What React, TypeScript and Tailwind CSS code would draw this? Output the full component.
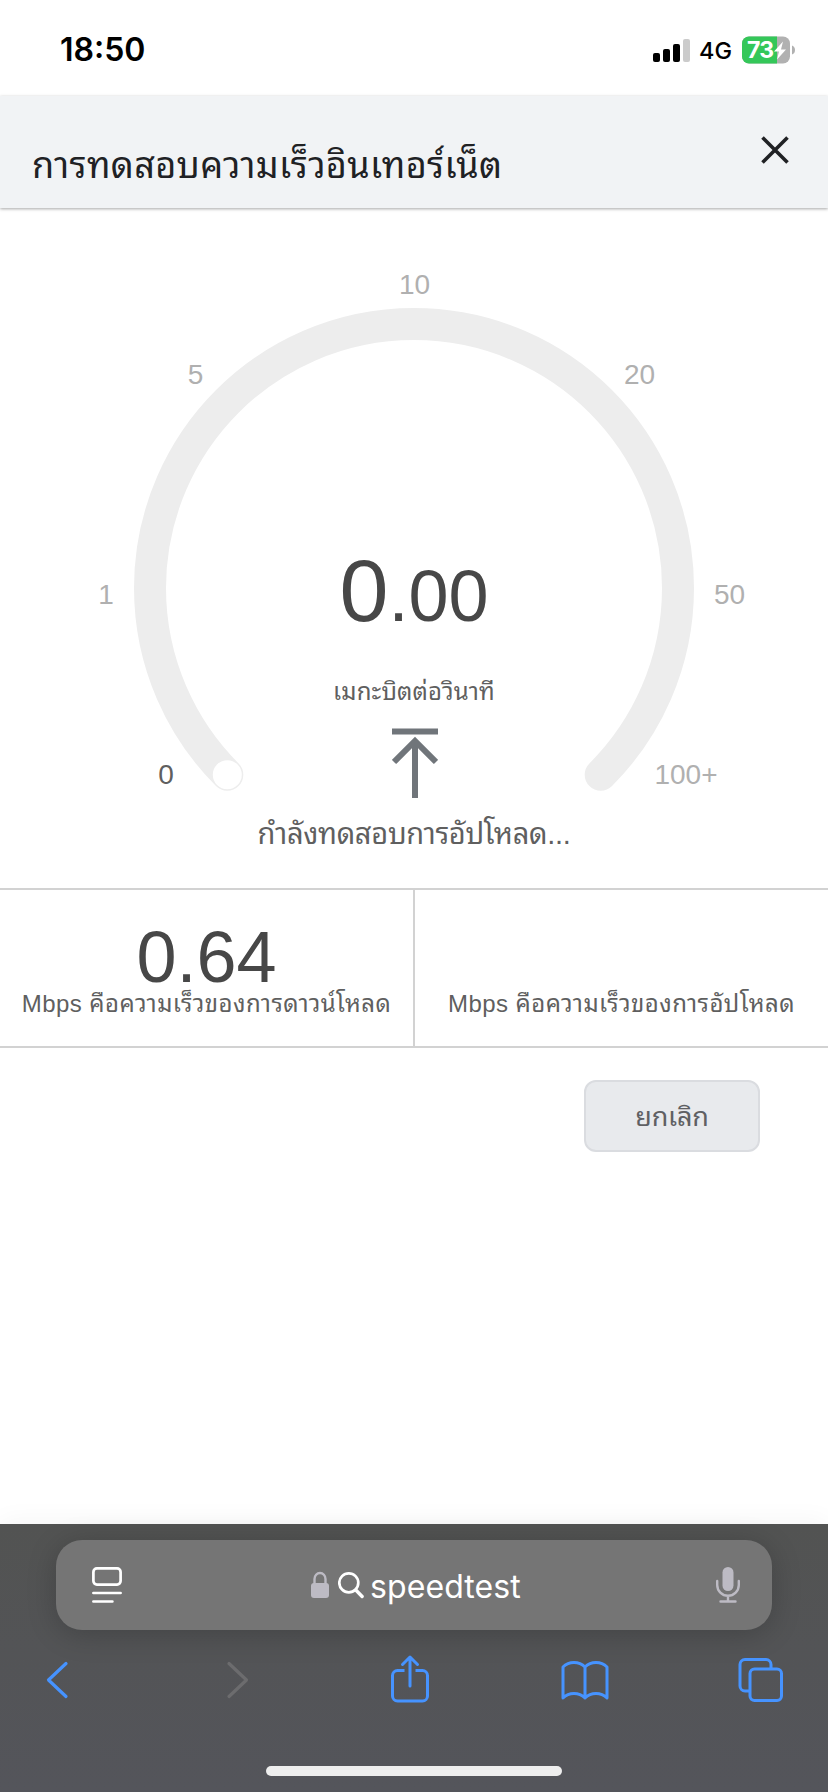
const ticks = [
  { label: '0', x: 166, y: 576, active: true },
  { label: '1', x: 106, y: 396 },
  { label: '5', x: 195.5, y: 175.5 },
  { label: '10', x: 414.5, y: 85.5 },
  { label: '20', x: 639.5, y: 175.5 },
  { label: '50', x: 729.5, y: 396 },
  { label: '100+', x: 686, y: 576 },
];

function StatusBar() {
  return (
    <div className="flex h-24 shrink-0 items-center pl-[60px] pr-8 pt-1 font-['Inter',sans-serif] text-black">
      <span className="text-[32px] font-semibold leading-10">18:50</span>
      <div className="ml-auto flex items-center">
        <svg width="38" height="28" viewBox="0 0 38 28">
          <rect x="0" y="17" width="7" height="9" rx="2" />
          <rect x="10" y="13" width="7" height="13" rx="2" />
          <rect x="20" y="8" width="7" height="18" rx="2" />
          <rect x="30" y="3" width="7" height="23" rx="2" fill="#cbcbcb" />
        </svg>
        <span className="ml-2 pt-0.5 text-[23.5px] font-medium leading-7">4G</span>
        <svg className="ml-2.5" width="54" height="28" viewBox="0 0 54 28">
          <clipPath id="battery">
            <rect x="0" y="0.500" width="48" height="27" rx="7" />
          </clipPath>
          <g clipPath="url(#battery)">
            <rect width="48" height="28" fill="#b1b1b1" />
            <rect width="35" height="28" fill="#34c759" />
          </g>
          <path d="M50 9.500q3 1 3 4.500t-3 4.500z" fill="#b1b1b1" />
          <text x="5" y="22" fontSize="23" fontWeight="700" letterSpacing="-0.8" fill="#fff">73</text>
          <path d="M41 5.500l-9 10h5l-2 8 9-10h-5z" fill="#fff" />
        </svg>
      </div>
    </div>
  );
}

function Gauge() {
  return (
    <svg className="col-start-1 row-start-1" width="828" height="680" viewBox="0 0 828 680">
      <path
        d="M227.300 566.700A264 264 0 1 1 600.700 566.700"
        fill="none"
        stroke="#ededed"
        strokeWidth="32"
        strokeLinecap="round"
      />
      <circle cx="227.300" cy="566.700" r="14.500" fill="#fff" />
      {ticks.map((t) => (
        <text
          key={t.label}
          x={t.x}
          y={t.y}
          textAnchor="middle"
          fontSize="28"
          fill={t.active ? '#5f5f5f' : '#b0b0b0'}
        >
          {t.label}
        </text>
      ))}
    </svg>
  );
}

function Result({ value, label }: { value?: string; label: string }) {
  return (
    <div className="flex flex-col items-center pt-[37px]">
      <div className="h-[60px] text-[72px] leading-[60px] text-[#474747]">{value}</div>
      <div className="mt-px whitespace-nowrap text-2xl leading-8 tracking-[0.45px] text-[#5f5f5f]">{label}</div>
    </div>
  );
}

function BrowserBar() {
  return (
    <div className="mt-auto flex h-[268px] shrink-0 flex-col bg-linear-to-b from-[#525352] to-[#54555b] pt-4 shadow-[0_-4px_24px_rgba(0,0,0,0.04)]">
      <div className="mx-14 flex h-[90px] items-center rounded-[26px] bg-[#757575] pl-9 pr-8 font-['Inter',sans-serif] text-white shadow-[0_4px_30px_rgba(0,0,0,0.2)]">
        <svg width="30" height="38" viewBox="0 0 30 38" fill="none" stroke="#fff" strokeWidth="2.700" strokeLinecap="round">
          <rect x="1.400" y="2.400" width="27.200" height="16.200" rx="3.500" />
          <path d="M1.400 27h27.200M1.400 35.500h19" />
        </svg>
        <div className="ml-[189px] flex items-center">
          <svg width="18" height="28" viewBox="0 0 18 28">
            <rect y="12" width="18" height="15" rx="3" fill="#bdbbc4" />
            <path d="M3.500 13V8a5.500 6 0 0 1 11 0v5" fill="none" stroke="#bdbbc4" strokeWidth="2.400" />
          </svg>
          <svg className="ml-[9px]" width="26" height="28" viewBox="0 0 26 28" fill="none" stroke="#fff" strokeLinecap="round">
            <circle cx="10.800" cy="11.800" r="9.500" strokeWidth="2.700" />
            <path d="M17.800 19l6.300 6.500" strokeWidth="3.400" />
          </svg>
          <span className="ml-1.5 pt-[3px] text-[32px] leading-10 tracking-[0.1px]">speedtest</span>
        </div>
        <svg className="ml-auto" width="24" height="38" viewBox="0 0 24 38" fill="none" stroke="#bdbbc4" strokeWidth="2.400" strokeLinecap="round">
          <rect x="6.500" y="1" width="11" height="24" rx="5.500" fill="#bdbbc4" stroke="none" />
          <path d="M1.200 15v4a10.800 10.800 0 0 0 21.600 0v-4M12 30v5M4.500 35.500h15" />
        </svg>
      </div>
      <div className="mt-[22px] flex justify-between pl-[33px] pr-[43px]">
        <svg width="48" height="56" viewBox="0 0 48 56" fill="none" stroke="#4693ff" strokeWidth="3.200" strokeLinecap="round" strokeLinejoin="round">
          <path d="M33 11.500L15.500 28 33 44.500" />
        </svg>
        <svg width="48" height="56" viewBox="0 0 48 56" fill="none" stroke="#6c6c6e" strokeWidth="3.200" strokeLinecap="round" strokeLinejoin="round">
          <path d="M20 11.500L37.500 28 20 44.500" />
        </svg>
        <svg width="48" height="56" viewBox="0 0 48 56" fill="none" stroke="#4693ff" strokeWidth="3" strokeLinecap="round" strokeLinejoin="round">
          <path d="M19.500 18.500h-7a5 5 0 0 0-5 5V44a5 5 0 0 0 5 5h25a5 5 0 0 0 5-5V23.500a5 5 0 0 0-5-5h-7" strokeLinecap="butt" />
          <path d="M25 34V5.500M17.500 12.500L25 5l7.500 7.500" />
        </svg>
        <svg width="48" height="56" viewBox="0 0 48 56" fill="none" stroke="#4693ff" strokeWidth="3" strokeLinecap="round" strokeLinejoin="round">
          <path d="M24 15C18 9 8 9 2 15v31c6-6 16-6 22 0 6-6 16-6 22 0V15c-6-6-16-6-22 0zM24 15v31" />
        </svg>
        <svg width="48" height="56" viewBox="0 0 48 56" fill="none" stroke="#4693ff" strokeWidth="3" strokeLinejoin="round">
          <rect x="13" y="17" width="31.500" height="31.500" rx="4.500" />
          <path d="M34 16.500v-4A5 5 0 0 0 29 7.500H8a5 5 0 0 0-5 5V34a5 5 0 0 0 5 5h4.500" />
        </svg>
      </div>
      <div className="mx-auto mb-4 mt-auto h-2.5 w-[296px] rounded-full bg-[#eeeeee]" />
    </div>
  );
}

export default function App() {
  return (
    <div className="flex h-[1792px] w-[828px] flex-col overflow-hidden bg-white font-['Liberation_Sans','Noto_Sans_Thai_Looped','Loma','Waree','Noto_Sans_Thai',sans-serif]">
      <StatusBar />

      <header className="flex h-28 shrink-0 justify-between bg-[#f1f3f5] pl-8 pr-[39px] shadow-[0_1px_3px_rgba(0,0,0,0.35)]">
        <h1 className="mt-12 whitespace-nowrap text-[36px] leading-[44px] tracking-[0.35px] text-[#202124]">การทดสอบความเร็วอินเทอร์เน็ต</h1>
        <svg className="mt-10" width="28" height="28" viewBox="0 0 28 28" stroke="#202124" strokeWidth="3.600">
          <path d="M1.500 1.500l25 25M26.500 1.500l-25 25" />
        </svg>
      </header>

      <section className="grid h-[680px] shrink-0">
        <Gauge />
        <div className="col-start-1 row-start-1 flex flex-col items-center pt-[333px] text-[#5f5f5f]">
          <div className="h-[100px] text-[88px] leading-[100px] text-[#474747]">
            0<span className="text-[72px] leading-none">.00</span>
          </div>
          <div className="mt-[35px] text-2xl leading-8 tracking-[0.15px]">เมกะบิตต่อวินาที</div>
          <svg className="ml-0.5 mt-5" width="46" height="70" viewBox="0 0 46 70" fill="none" stroke="#70757a" strokeWidth="6">
            <path d="M0 3.500h46M23 70V13M2 34l21-21 21 21" />
          </svg>
          <div className="mt-4 whitespace-nowrap text-[29px] leading-10 tracking-[-0.3px]">กำลังทดสอบการอัปโหลด...</div>
        </div>
      </section>

      <section className="grid h-40 shrink-0 grid-cols-[415px_413px] border-y-2 border-[#d2d2d2]">
        <div className="border-r-2 border-[#d2d2d2]">
          <Result value="0.64" label="Mbps คือความเร็วของการดาวน์โหลด" />
        </div>
        <Result label="Mbps คือความเร็วของการอัปโหลด" />
      </section>

      <button className="ml-auto mr-[68px] mt-8 h-[72px] w-44 shrink-0 rounded-xl border-2 border-[#dadce0] bg-[#e8eaed] pt-0.5 text-[27px] leading-10 tracking-[-0.2px] text-[#5f6063]">
        ยกเลิก
      </button>

      <BrowserBar />
    </div>
  );
}
